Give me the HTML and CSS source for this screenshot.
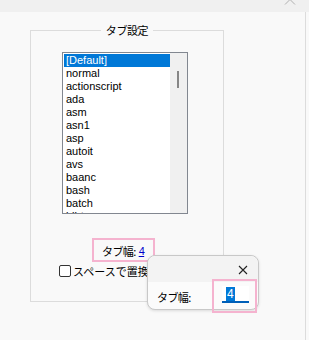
FILE: index.html
```html
<!DOCTYPE html>
<html lang="ja">
<head>
  <meta charset="UTF-8" />
  <title>タブ設定</title>
  <link rel="stylesheet" href="styles.css">
</head>
<body>

<div class="topbar">
  <svg class="caret" width="12" height="6" viewBox="0 0 12 6">
    <polyline points="1,5.5 6,0.5 11,5.5" fill="none" stroke="#b0b0b0" stroke-width="1"/>
  </svg>
</div>

<div class="page">
  <fieldset class="group">
    <legend>タブ設定</legend>

    <div class="listbox">
      <ul class="items">
        <li class="selected">[Default]</li>
        <li>normal</li>
        <li>actionscript</li>
        <li>ada</li>
        <li>asm</li>
        <li>asn1</li>
        <li>asp</li>
        <li>autoit</li>
        <li>avs</li>
        <li>baanc</li>
        <li>bash</li>
        <li>batch</li>
        <li>bibtex</li>
      </ul>
      <div class="scrollbar"><div class="thumb"></div></div>
    </div>

    <div class="tab-row">
      <span class="mark tab-mark">タブ幅: <a class="tab-link">4</a></span>
    </div>

    <label class="check">
      <span class="check-box"></span>スペースで置換
    </label>
  </fieldset>

  <div class="popup">
    <div class="popup-head">
      <svg class="close" width="10" height="10" viewBox="0 0 10 10">
        <path d="M1 1 L9 9 M9 1 L1 9" stroke="#222" stroke-width="1.1"/>
      </svg>
    </div>
    <div class="popup-body">
      <span class="popup-label">タブ幅:</span>
      <span class="mark input-mark">
        <span class="num-input"><span class="sel-text">4</span></span>
      </span>
    </div>
  </div>
</div>

</body>
</html>
```

FILE: styles.css
```css
* { box-sizing: border-box; }

body {
  margin: 0;
  width: 309px;
  height: 340px;
  overflow: hidden;
  background: #f9f9f9;
  font-family: "Liberation Sans", "Noto Sans CJK JP", sans-serif;
  font-size: 11px;
  color: #000;
}

.topbar {
  height: 12px;
  background: #f0f0f0;
  display: flex;
  justify-content: flex-end;
  padding-right: 13px;
}

.caret {
  display: block;
  margin-top: -1px;
}

.page {
  position: relative;
  width: 306px;
  height: 328px;
  border-right: 1px solid #dcdcdc;
  padding-top: 11px;
}

.group {
  margin: 0 0 0 30px;
  padding: 0;
  width: 194px;
  height: 279px;
  border: 1px solid #dcdcdc;
  border-top-color: #dcdcdc;
}

.group legend {
  margin: 0 auto;
  padding: 0 5px;
  line-height: 14px;
  font-family: "Noto Sans CJK JP", sans-serif;
  font-size: 11px;
  letter-spacing: -0.4px;
}

.listbox {
  display: flex;
  margin: 15px 0 0 31px;
  width: 126px;
  height: 162px;
  border: 1px solid #828790;
  background: #fff;
  padding: 1px 0 0 1px;
  overflow: hidden;
}

.items {
  list-style: none;
  margin: 0;
  padding: 0;
  width: 106px;
}

.items li {
  height: 13px;
  line-height: 13px;
  padding-left: 2px;
  white-space: nowrap;
}

.items li.selected {
  background: #0078d7;
  color: #fff;
}

.scrollbar {
  width: 17px;
  margin-top: -1px;
  height: 160px;
  background: #f0f0f0;
  padding: 18px 0 0 7px;
}

.thumb {
  width: 2px;
  height: 17px;
  background: #868686;
}

.tab-row {
  margin: 24px 0 0 61px;
  display: flex;
}

.mark {
  border: 2px solid #f5b3cf;
}

.tab-mark {
  display: inline-flex;
  align-items: center;
  height: 24px;
  width: 63px;
  padding: 2px 0 0 8px;
  font-family: "Noto Sans CJK JP", sans-serif;
  letter-spacing: -0.6px;
}

.tab-link {
  color: #0000cc;
  text-decoration: underline;
  margin-left: 3px;
  font-family: "Liberation Sans", sans-serif;
}

.check {
  display: flex;
  align-items: center;
  gap: 2px;
  margin: 2px 0 0 28px;
  font-family: "Noto Sans CJK JP", sans-serif;
  white-space: nowrap;
  height: 14px;
}

.check-box {
  width: 12px;
  height: 12px;
  border: 1px solid #333;
  border-radius: 2px;
  background: #fff;
}

.popup {
  position: absolute;
  left: 147px;
  top: 243px;
  width: 112px;
  height: 55px;
  border: 1px solid #c8c8c8;
  border-radius: 8px;
  background: #fbfbfb;
  box-shadow: 0 1px 3px rgba(0, 0, 0, 0.12);
}

.popup-head {
  height: 26px;
  background: #f3f3f3;
  border-radius: 8px 8px 0 0;
  display: flex;
  justify-content: flex-end;
  align-items: center;
  padding-right: 10px;
  padding-top: 1px;
}

.popup-body {
  display: flex;
  align-items: flex-start;
  height: 27px;
  padding-left: 9px;
}

.popup-label {
  font-family: "Noto Sans CJK JP", sans-serif;
  letter-spacing: -0.6px;
  margin-top: 7px;
  width: 55px;
}

.input-mark {
  display: block;
  margin-top: -3px;
  width: 45px;
  height: 34px;
  padding: 5px 0 0 8px;
}

.num-input {
  display: block;
  width: 27px;
  height: 17px;
  background: #fff;
  border-bottom: 2px solid #005fb8;
  padding: 2px 0 0 4px;
  font-size: 12px;
  line-height: 13px;
}

.sel-text {
  background: #0078d7;
  color: #fff;
  padding: 0 1px;
}
```
